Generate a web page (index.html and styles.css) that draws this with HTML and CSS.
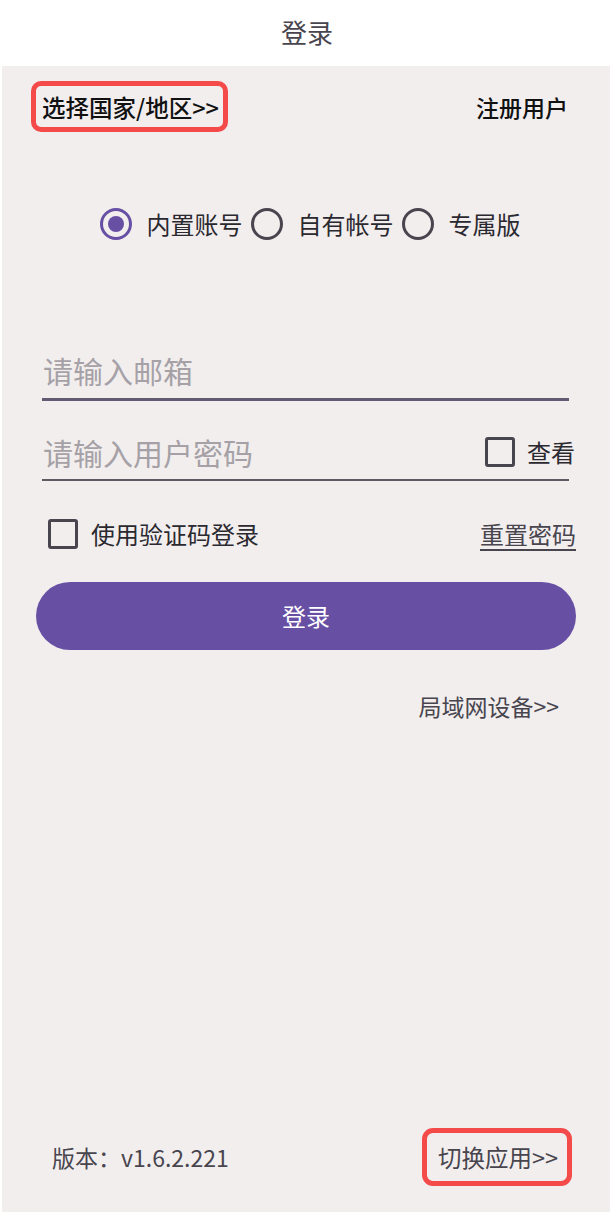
FILE: index.html
```html
<!DOCTYPE html>
<html lang="zh-CN">
<head>
<meta charset="utf-8">
<title>登录</title>
<link rel="stylesheet" href="styles.css">
</head>
<body>
<header class="appbar">登录</header>
<main class="page">
  <div class="topbar">
    <span class="outlined region">选择国家/地区&gt;&gt;</span>
    <span class="register">注册用户</span>
  </div>

  <div class="radios">
    <label class="radio checked"><span class="dot"></span><span class="rlabel">内置账号</span></label>
    <label class="radio"><span class="dot"></span><span class="rlabel">自有帐号</span></label>
    <label class="radio"><span class="dot"></span><span class="rlabel">专属版</span></label>
  </div>

  <div class="field email">
    <span class="placeholder">请输入邮箱</span>
  </div>
  <div class="field password">
    <span class="placeholder">请输入用户密码</span>
    <span class="check small"><span class="box"></span><span class="clabel">查看</span></span>
  </div>

  <div class="options">
    <span class="check"><span class="box"></span><span class="clabel">使用验证码登录</span></span>
    <span class="reset">重置密码</span>
  </div>

  <button class="login">登录</button>

  <div class="lan">局域网设备&gt;&gt;</div>

  <div class="footer">
    <span class="version">版本：v1.6.2.221</span>
    <span class="outlined switch">切换应用&gt;&gt;</span>
  </div>
</main>
</body>
</html>
```

FILE: styles.css
```css
* { box-sizing: border-box; }
html, body { margin: 0; padding: 0; }
body {
  background: #ffffff;
  font-family: "Noto Sans CJK SC", "Noto Sans", sans-serif;
  color: #1d1b20;
  width: 614px;
  height: 1212px;
  overflow: hidden;
  display: flex;
  flex-direction: column;
}
.appbar {
  height: 66px;
  flex: none;
  display: flex;
  align-items: center;
  justify-content: center;
  padding-bottom: 4px;
  font-size: 26px;
  color: #49454f;
  background: #ffffff;
}
.page {
  flex: 1;
  margin: 0 4px 0 2px;
  background: #f2eeee;
  display: flex;
  flex-direction: column;
}
.topbar {
  margin-top: 15px;
  padding: 0 42px 0 29px;
  display: flex;
  justify-content: space-between;
  align-items: center;
}
.outlined {
  border: 5px solid #f44a4a;
  border-radius: 10px;
  display: inline-flex;
  align-items: center;
}
.region {
  height: 51px;
  padding: 0 4px 0 6px;
  font-size: 23.5px;
  font-weight: 500;
  color: #111111;
}
.register {
  font-size: 23px;
  font-weight: 500;
  color: #111111;
}
.radios {
  margin-top: 76px;
  padding-left: 8px;
  display: flex;
  justify-content: center;
  gap: 8px;
}
.radio {
  display: flex;
  align-items: center;
  gap: 15px;
}
.dot {
  width: 32px;
  height: 32px;
  border-radius: 50%;
  border: 3.5px solid #49454f;
  display: flex;
  align-items: center;
  justify-content: center;
}
.radio.checked .dot { border-color: #6750a4; }
.radio.checked .dot::after {
  content: "";
  width: 16px;
  height: 16px;
  border-radius: 50%;
  background: #6750a4;
}
.rlabel {
  font-size: 24px;
  color: #2b2930;
  line-height: 32px;
}
.field {
  margin: 0 41px 0 40px;
  height: 49px;
  padding-bottom: 10px;
  display: flex;
  align-items: center;
  justify-content: space-between;
}
.email {
  margin-top: 112px;
  border-bottom: 3px solid #625b71;
}
.password {
  margin-top: 32px;
  height: 48px;
  padding-bottom: 9px;
  border-bottom: 2px solid #5d5a62;
}
.placeholder {
  font-size: 30px;
  color: #a5a1a6;
  padding-left: 1px;
}
.check {
  display: flex;
  align-items: center;
  gap: 13px;
}
.box {
  width: 30px;
  height: 30px;
  border: 3.5px solid #49454f;
  border-radius: 3px;
}
.clabel {
  font-size: 24px;
  color: #2b2930;
}
.password .check { margin-right: -6px; gap: 12px; }
.options {
  margin: 35px 34px 0 46px;
  display: flex;
  justify-content: space-between;
  align-items: center;
}
.reset {
  font-size: 24px;
  color: #49454f;
  text-decoration: underline;
  text-underline-offset: 5px;
  text-decoration-thickness: 1.5px;
}
.login {
  margin: 31px 34px 0 34px;
  height: 68px;
  border: none;
  border-radius: 34px;
  background: #6750a4;
  color: #ffffff;
  font-family: "Noto Sans CJK SC", "Noto Sans", sans-serif;
  font-size: 24px;
  padding-bottom: 3px;
}
.lan {
  margin-top: 40px;
  padding-right: 51px;
  text-align: right;
  font-size: 23px;
  line-height: 32px;
  color: #48454e;
}
.footer {
  margin-top: auto;
  margin-bottom: 26px;
  padding: 0 38px 0 50px;
  display: flex;
  justify-content: space-between;
  align-items: center;
}
.version {
  font-size: 23px;
  color: #48454e;
}
.switch {
  height: 58px;
  border-width: 5px;
  border-radius: 11px;
  padding: 0 9px 0 11px;
  font-size: 23.5px;
  color: #48454e;
}
```
